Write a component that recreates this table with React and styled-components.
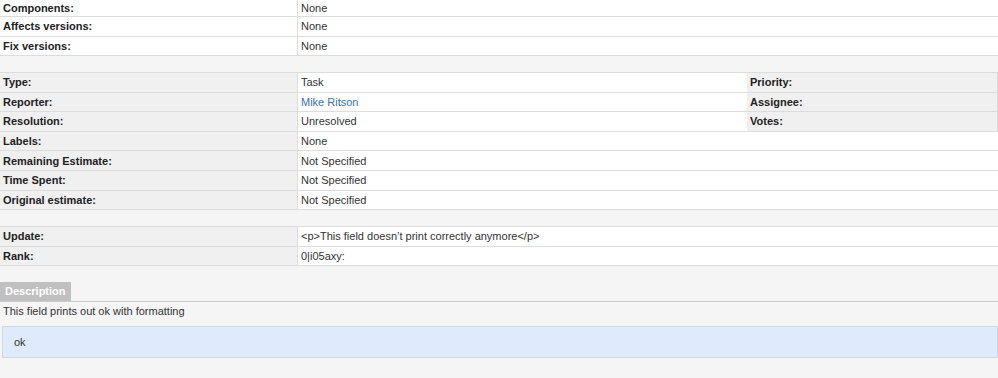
import React from "react";
import styled, { createGlobalStyle } from "styled-components";

const GlobalStyle = createGlobalStyle`
  html, body {
    margin: 0;
    padding: 0;
    background: #f5f5f5;
  }
  body {
    font-family: "Liberation Sans", Arial, sans-serif;
    font-size: 11px;
    color: #333;
  }
`;

const Page = styled.div`
  width: 998px;
  height: 378px;
  overflow: hidden;
  background: #f5f5f5;
`;

const Section = styled.div`
  display: grid;
  grid-template-columns: 298px 449px 1fr;
  background: #fff;
  border-top: ${(p) => (p.$top ? "1px solid #ddd" : "none")};
  margin-bottom: 16px;
`;

const Cell = styled.div`
  box-sizing: border-box;
  height: ${(p) => p.$h || 19.6}px;
  display: flex;
  align-items: center;
  padding: 0 3px;
  border-bottom: 1px solid #ddd;
  white-space: nowrap;
  grid-column: ${(p) => p.$span || "auto"};
`;

const Label = styled(Cell)`
  font-weight: bold;
  color: #222;
  background: ${(p) => (p.$plain ? "#fff" : "#f0f0f0")};
  border-right: 1px solid #ddd;
`;

const Value = styled(Cell)`
  background: #fff;
`;

const Link = styled.a`
  color: #3b73af;
  text-decoration: none;
`;

const TabBar = styled.div`
  display: flex;
  border-bottom: 1px solid #ccc;
`;

const Tab = styled.div`
  background: #c0c0c0;
  color: #fff;
  font-weight: bold;
  height: 19px;
  line-height: 19px;
  padding: 0 5px;
`;

const DescText = styled.div`
  height: 19px;
  line-height: 19px;
  padding: 0 3px;
`;

const Panel = styled.div`
  box-sizing: border-box;
  margin: 5px 0 0 2px;
  height: 32px;
  background: #dfeafc;
  border: 1px solid #cdd8ea;
  display: flex;
  align-items: center;
  padding: 0 11px;
`;

const topRows = [
  ["Components:", "None", 17],
  ["Affects versions:", "None", 19.5],
  ["Fix versions:", "None", 19.5],
];

export default function App() {
  return (
    <Page>
      <GlobalStyle />
      <Section>
        {topRows.map(([l, v, h]) => (
          <React.Fragment key={l}>
            <Label $plain $h={h}>{l}</Label>
            <Value $h={h} $span="span 2">{v}</Value>
          </React.Fragment>
        ))}
      </Section>

      <Section $top>
        <Label>Type:</Label>
        <Value>Task</Value>
        <Label>Priority:</Label>
        <Label>Reporter:</Label>
        <Value>
          <Link href="#">Mike Ritson</Link>
        </Value>
        <Label>Assignee:</Label>
        <Label>Resolution:</Label>
        <Value>Unresolved</Value>
        <Label>Votes:</Label>
        <Label>Labels:</Label>
        <Value $span="span 2">None</Value>
        <Label>Remaining Estimate:</Label>
        <Value $span="span 2">Not Specified</Value>
        <Label>Time Spent:</Label>
        <Value $span="span 2">Not Specified</Value>
        <Label>Original estimate:</Label>
        <Value $span="span 2">Not Specified</Value>
      </Section>

      <Section $top>
        <Label>Update:</Label>
        <Value $span="span 2">&lt;p&gt;This field doesn’t print correctly anymore&lt;/p&gt;</Value>
        <Label>Rank:</Label>
        <Value $span="span 2">0|i05axy:</Value>
      </Section>

      <TabBar>
        <Tab>Description</Tab>
      </TabBar>
      <DescText>This field prints out ok with formatting</DescText>
      <Panel>ok</Panel>
    </Page>
  );
}
